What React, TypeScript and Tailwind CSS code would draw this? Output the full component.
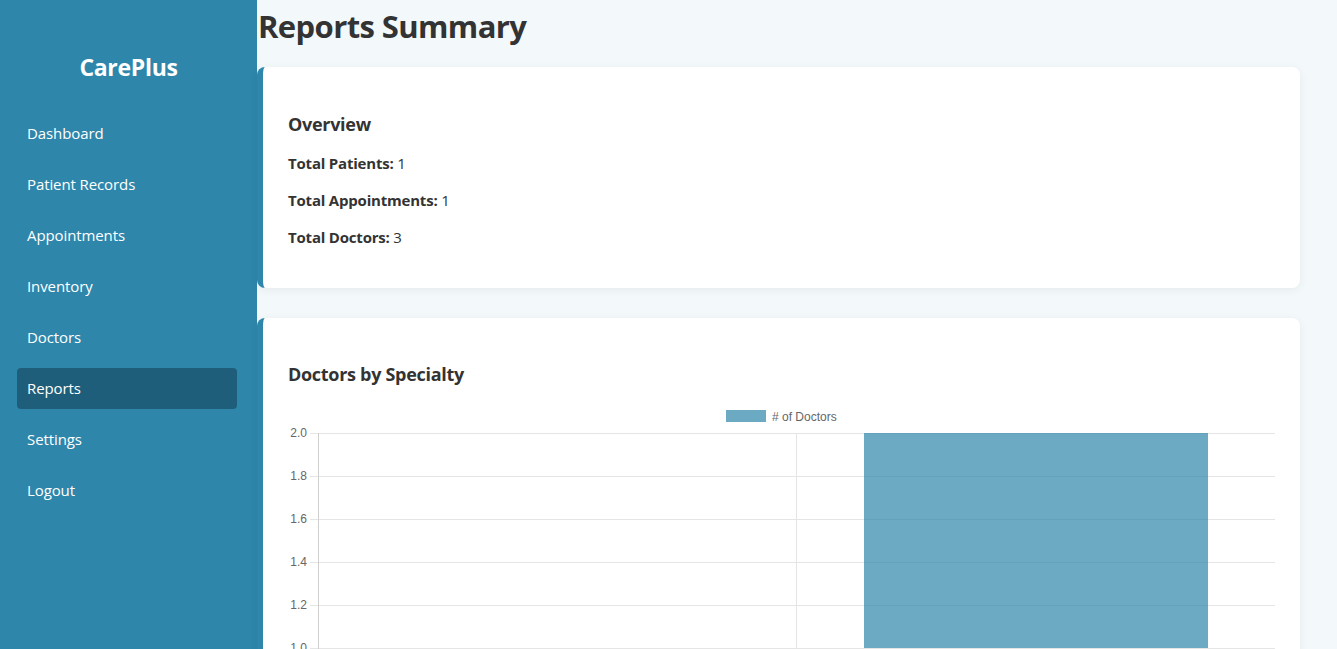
import React from 'react';

const navItems = ['Dashboard', 'Patient Records', 'Appointments', 'Inventory', 'Doctors', 'Reports', 'Settings', 'Logout'];

const yTicks = [
  { label: '2.0', y: 27 },
  { label: '1.8', y: 70 },
  { label: '1.6', y: 113 },
  { label: '1.4', y: 156 },
  { label: '1.2', y: 199 },
  { label: '1.0', y: 242 },
];

function DoctorsChart() {
  return (
    <svg width="987" height="280" className="block" style={{ fontFamily: '"Liberation Sans", Arial, sans-serif' }}>
      {/* legend */}
      <rect x="438" y="4" width="40" height="12" fill="rgba(46,134,171,0.7)" />
      <text x="484" y="14.5" fontSize="12" fill="#666">
        # of Doctors
      </text>

      {/* horizontal grid */}
      {yTicks.map((t) => (
        <g key={t.label}>
          <line x1="22" x2="987" y1={t.y + 0.5} y2={t.y + 0.5} stroke="#e5e5e5" strokeWidth="1" />
          <text x="19" y={t.y + 4} fontSize="12" fill="#666" textAnchor="end">
            {t.label}
          </text>
        </g>
      ))}

      {/* vertical grid */}
      <line x1="508.5" x2="508.5" y1="27" y2="250" stroke="#e5e5e5" />
      <line x1="30.5" x2="30.5" y1="27" y2="250" stroke="#cfcfcf" />

      {/* bar */}
      <rect x="576" y="27" width="344" height="215" fill="rgba(46,134,171,0.7)" />

      {/* x labels */}
      <text x="269" y="266" fontSize="12" fill="#666" textAnchor="middle">
        General Medicine
      </text>
      <text x="748" y="266" fontSize="12" fill="#666" textAnchor="middle">
        Cardiology
      </text>
    </svg>
  );
}

export default function App() {
  return (
    <div className="flex min-h-screen bg-[#f3f8fb] text-[#333]" style={{ fontFamily: '"Open Sans", "Noto Sans", sans-serif' }}>
      {/* Sidebar */}
      <aside className="w-[257px] shrink-0 bg-[#2e86ab] text-white px-[17px] pt-[49px] min-h-screen">
        <h2 className="text-center text-[23px] font-bold leading-[36px] mb-[28px] tracking-[-0.3px]">CarePlus</h2>
        <nav className="flex flex-col gap-[10px]">
          {navItems.map((item) => (
            <a
              key={item}
              className={`w-[220px] rounded-[4px] px-[10px] h-[41px] flex items-center text-[15px] tracking-[-0.1px] ${
                item === 'Reports' ? 'bg-[#1f5e7b]' : ''
              }`}
            >
              {item}
            </a>
          ))}
        </nav>
      </aside>

      {/* Main */}
      <main className="flex-1 pr-[37px]">
        <h1 className="text-[31px] font-bold leading-[42px] pt-[5px] pb-[20px] pl-px tracking-[-0.6px]">Reports Summary</h1>

        <section className="bg-white rounded-[8px] border-l-[6px] border-[#2e86ab] shadow-[0_2px_10px_rgba(0,0,0,0.06)] px-[25px] py-[24px]">
          <h3 className="text-[18px] font-bold leading-[26px] mt-[20px] mb-[16px] tracking-[-0.3px]">Overview</h3>
          <p className="text-[15px] leading-[21px] my-[16px] tracking-[-0.2px]">
            <strong>Total Patients:</strong> 1
          </p>
          <p className="text-[15px] leading-[21px] my-[16px] tracking-[-0.2px]">
            <strong>Total Appointments:</strong> 1
          </p>
          <p className="text-[15px] leading-[21px] my-[16px] tracking-[-0.2px]">
            <strong>Total Doctors:</strong> 3
          </p>
        </section>

        <section className="mt-[30px] bg-white rounded-[8px] border-l-[6px] border-[#2e86ab] shadow-[0_2px_10px_rgba(0,0,0,0.06)] px-[25px] py-[24px]">
          <h3 className="text-[18px] font-bold leading-[26px] mt-[19px] mb-[19px] tracking-[-0.3px]">Doctors by Specialty</h3>
          <DoctorsChart />
        </section>
      </main>
    </div>
  );
}
